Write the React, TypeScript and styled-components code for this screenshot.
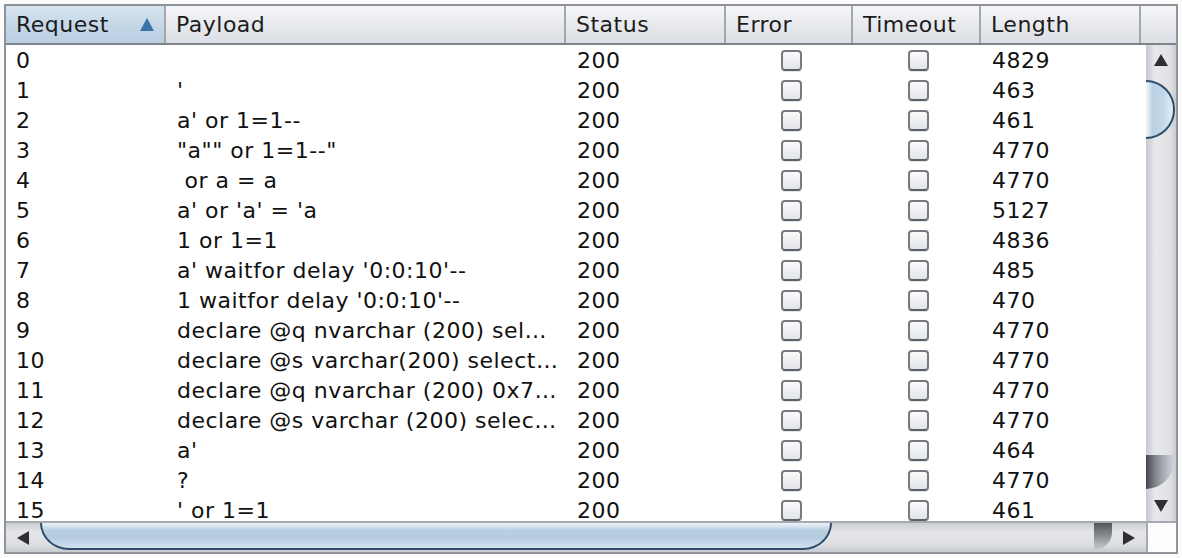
import styled, { createGlobalStyle } from "styled-components";

const Global = createGlobalStyle`
  html, body {
    margin: 0;
    padding: 0;
    background: #fbfbfc;
  }
  body {
    font-family: "DejaVu Sans", "Liberation Sans", sans-serif;
  }
`;

const Frame = styled.div`
  margin: 4px 0 0 4px;
  width: 1170px;
  height: 546px;
  border: 2px solid #8e939a;
  display: flex;
  flex-direction: column;
  background: #fff;
  overflow: hidden;
`;

const HeaderRow = styled.div`
  display: flex;
  height: 37px;
  border-bottom: 2px solid #80858c;
  flex: none;
`;

const HeaderCell = styled.div<{ $w: number; $active?: boolean }>`
  width: ${(p) => p.$w}px;
  flex: none;
  box-sizing: border-box;
  border-right: 2px solid #a3a7ad;
  padding-left: 10px;
  display: flex;
  align-items: center;
  justify-content: space-between;
  font-size: 22px;
  letter-spacing: 0.5px;
  color: #1c1c1c;
  background: ${(p) =>
    p.$active
      ? "linear-gradient(#d7e4ee, #c3d6e6 55%, #b9cfe2)"
      : "linear-gradient(#f5f6f8, #e6e8ec 55%, #dcdfe5)"};
`;

const HeaderCorner = styled.div`
  flex: 1;
  background: linear-gradient(#f5f6f8, #e6e8ec 55%, #dcdfe5);
`;

const SortArrow = styled.span`
  width: 0;
  height: 0;
  margin-right: 10px;
  border-left: 7px solid transparent;
  border-right: 7px solid transparent;
  border-bottom: 13px solid #3a74a8;
`;

const Middle = styled.div`
  display: flex;
  height: 476px;
  flex: none;
`;

const Body = styled.div`
  width: 1140px;
  flex: none;
  overflow: hidden;
`;

const Row = styled.div`
  display: flex;
  height: 30px;
`;

const Cell = styled.div<{ $w: number; $center?: boolean; $pad?: number }>`
  width: ${(p) => p.$w}px;
  flex: none;
  box-sizing: border-box;
  padding-left: ${(p) => (p.$center ? 0 : p.$pad ?? 11)}px;
  padding-right: ${(p) => (p.$center ? 0 : 6)}px;
  display: flex;
  align-items: center;
  justify-content: ${(p) => (p.$center ? "center" : "flex-start")};
  font-size: 22px;
  letter-spacing: 0.5px;
  color: #111;
  white-space: pre;
  overflow: hidden;
`;

const Check = styled.span`
  width: 17px;
  height: 17px;
  margin-left: 3px;
  border: 2px solid #767b82;
  border-bottom-color: #5c6168;
  border-radius: 4px;
  background: linear-gradient(#fbfbfc, #e2e4e8);
  box-shadow: 0 1px 0 #e3e6ea;
`;

const VScroll = styled.div`
  flex: 1;
  display: flex;
  flex-direction: column;
  background: linear-gradient(90deg, #c6c9cf, #e7e8eb 30%, #dfe1e5 80%, #c9ccd1);
`;

const ArrowBtn = styled.div`
  height: 30px;
  flex: none;
  display: flex;
  align-items: center;
  justify-content: center;
`;

const Tri = styled.span<{ $dir: "up" | "down" | "left" | "right" }>`
  width: 0;
  height: 0;
  ${(p) =>
    p.$dir === "up"
      ? "border-left: 7px solid transparent; border-right: 7px solid transparent; border-bottom: 12px solid #2e2f33;"
      : p.$dir === "down"
      ? "border-left: 7px solid transparent; border-right: 7px solid transparent; border-top: 12px solid #2e2f33;"
      : p.$dir === "left"
      ? "border-top: 7px solid transparent; border-bottom: 7px solid transparent; border-right: 12px solid #2e2f33;"
      : "border-top: 7px solid transparent; border-bottom: 7px solid transparent; border-left: 12px solid #2e2f33;"}
`;

const VTrack = styled.div`
  flex: 1;
  position: relative;
`;

const VThumb = styled.div`
  margin-top: 5px;
  width: 27px;
  height: 55px;
  border: 2px solid #2f4d69;
  border-left: none;
  border-radius: 0 30px 30px 0;
  background: linear-gradient(90deg, #f2f7fb, #b8d0e3 25%, #c4d8e9 65%, #e2eef7);
`;

const VEndShade = styled.div`
  position: absolute;
  left: 0;
  right: 2px;
  bottom: 2px;
  height: 34px;
  border-radius: 0 0 28px 0;
  background: linear-gradient(90deg, #2e3035, #7c7f86 40%, #b8bbc1 80%, #cfd1d5);
  opacity: 0.85;
`;

const Bottom = styled.div`
  display: flex;
  height: 31px;
  flex: none;
`;

const HScroll = styled.div`
  width: 1140px;
  flex: none;
  display: flex;
  border-top: 2px solid #a6aab0;
  box-sizing: border-box;
  background: linear-gradient(#c9ccd1, #e4e6e9 30%, #dcdee2 75%, #c7cad0);
`;

const HArrowBtn = styled.div`
  width: 34px;
  flex: none;
  display: flex;
  align-items: center;
  justify-content: center;
`;

const HTrack = styled.div`
  flex: 1;
  display: flex;
  position: relative;
`;

const HThumb = styled.div`
  width: 792px;
  height: 27px;
  box-sizing: border-box;
  border: 2px solid #2f4d69;
  border-top: none;
  border-bottom-left-radius: 30px 28px;
  border-bottom-right-radius: 30px 28px;
  background: linear-gradient(#eef4f9, #b8cfe2 30%, #b5cce0 60%, #d3e3f0);
`;

const HEndShade = styled.div`
  position: absolute;
  right: 0;
  top: 0;
  bottom: 2px;
  width: 18px;
  border-radius: 0 0 22px 0;
  background: linear-gradient(#34363b, #6f727a 45%, #b2b5bb 85%, #c7cad0);
  opacity: 0.8;
`;

const Corner = styled.div`
  flex: 1;
  background: #fdfdfd;
  border-top: 2px solid #a6aab0;
  border-left: 2px solid #a6aab0;
`;

const cols = [
  { name: "Request", w: 160 },
  { name: "Payload", w: 400 },
  { name: "Status", w: 160 },
  { name: "Error", w: 127 },
  { name: "Timeout", w: 128 },
  { name: "Length", w: 160 },
];

const rows: [string, string, string][] = [
  ["0", "", "4829"],
  ["1", "'", "463"],
  ["2", "a' or 1=1--", "461"],
  ["3", '"a"" or 1=1--"', "4770"],
  ["4", " or a = a", "4770"],
  ["5", "a' or 'a' = 'a", "5127"],
  ["6", "1 or 1=1", "4836"],
  ["7", "a' waitfor delay '0:0:10'--", "485"],
  ["8", "1 waitfor delay '0:0:10'--", "470"],
  ["9", "declare @q nvarchar (200) sel…", "4770"],
  ["10", "declare @s varchar(200) select…", "4770"],
  ["11", "declare @q nvarchar (200) 0x7…", "4770"],
  ["12", "declare @s varchar (200) selec…", "4770"],
  ["13", "a'", "464"],
  ["14", "?", "4770"],
  ["15", "' or 1=1", "461"],
];

export default function App() {
  return (
    <>
      <Global />
      <Frame>
        <HeaderRow>
          {cols.map((c, i) => (
            <HeaderCell key={c.name} $w={c.w} $active={i === 0}>
              {c.name}
              {i === 0 && <SortArrow />}
            </HeaderCell>
          ))}
          <HeaderCorner />
        </HeaderRow>
        <Middle>
          <Body>
            {rows.map(([req, payload, len]) => (
              <Row key={req}>
                <Cell $w={160} $pad={10}>
                  {req}
                </Cell>
                <Cell $w={400}>{payload}</Cell>
                <Cell $w={160}>200</Cell>
                <Cell $w={127} $center>
                  <Check />
                </Cell>
                <Cell $w={128} $center>
                  <Check />
                </Cell>
                <Cell $w={160}>{len}</Cell>
              </Row>
            ))}
          </Body>
          <VScroll>
            <ArrowBtn>
              <Tri $dir="up" />
            </ArrowBtn>
            <VTrack>
              <VThumb />
              <VEndShade />
            </VTrack>
            <ArrowBtn>
              <Tri $dir="down" />
            </ArrowBtn>
          </VScroll>
        </Middle>
        <Bottom>
          <HScroll>
            <HArrowBtn>
              <Tri $dir="left" />
            </HArrowBtn>
            <HTrack>
              <HThumb />
              <HEndShade />
            </HTrack>
            <HArrowBtn>
              <Tri $dir="right" />
            </HArrowBtn>
          </HScroll>
          <Corner />
        </Bottom>
      </Frame>
    </>
  );
}
